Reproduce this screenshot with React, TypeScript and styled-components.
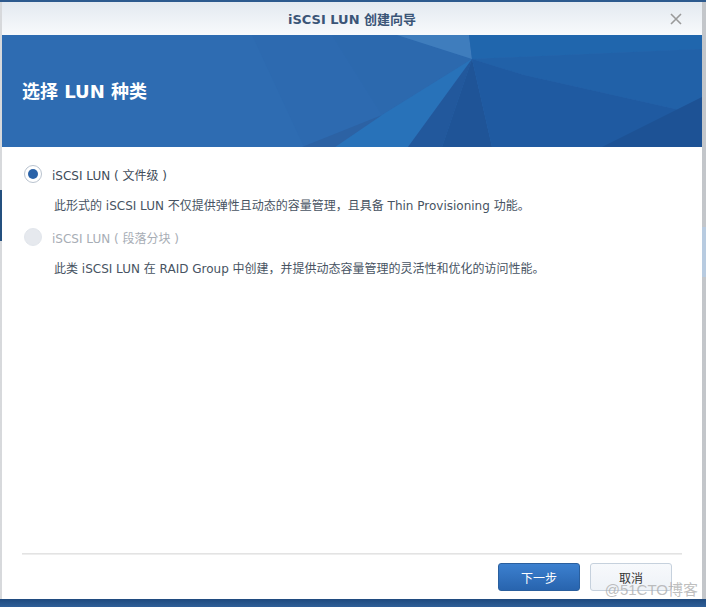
import React, { ReactElement, useState } from 'react';
import styled, { createGlobalStyle } from 'styled-components';

const GlobalStyle = createGlobalStyle`
  html, body {
    margin: 0;
    padding: 0;
    background: #c9cdd3;
  }
  * {
    box-sizing: border-box;
  }
`;

const FONT = `"DejaVu Sans", "Noto Sans CJK SC", sans-serif`;

const Page = styled.div`
  position: relative;
  width: 706px;
  height: 607px;
  padding: 2px 4px 8px 2px;
  font-family: ${FONT};
  background:
    linear-gradient(#2d5a8e, #2d5a8e) top / 100% 2px no-repeat,
    linear-gradient(#1f4a7e, #2f5f98) bottom / 100% 8px no-repeat,
    linear-gradient(#24507f, #24507f) 0 190px / 2px 51px no-repeat,
    linear-gradient(#b8cbe0, #b8cbe0) 100% 227px / 4px 50px no-repeat,
    linear-gradient(90deg, #d7d9dc, #c3c6ca);
`;

const Dialog = styled.div`
  display: flex;
  flex-direction: column;
  width: 700px;
  height: 597px;
  background: #ffffff;
`;

const TitleBar = styled.div`
  position: relative;
  display: flex;
  align-items: center;
  justify-content: center;
  height: 33px;
  background: linear-gradient(#e3e9f0, #f8fafc);
`;

const TitleText = styled.div`
  font-size: 13px;
  font-weight: bold;
  color: #3b5577;
`;

const CloseButton = styled.button`
  position: absolute;
  right: 18px;
  top: 9px;
  width: 16px;
  height: 16px;
  padding: 0;
  border: none;
  background: none;
  display: flex;
  align-items: center;
  justify-content: center;
`;

const Banner = styled.div`
  position: relative;
  height: 112px;
  background: #2e6cb2;
  overflow: hidden;
  display: flex;
  align-items: center;
  padding-left: 20px;
`;

const BannerArt = styled.svg`
  position: absolute;
  top: 0;
  left: 0;
`;

const BannerTitle = styled.h1`
  position: relative;
  margin: 0 0 2px;
  font-size: 18px;
  font-weight: bold;
  color: #ffffff;
`;

const Body = styled.div`
  flex: 1;
  padding: 16px 22px 0;
  display: flex;
  flex-direction: column;
`;

const Option = styled.label<{ disabled?: boolean }>`
  display: flex;
  align-items: center;
  gap: 10px;
  height: 22px;
  font-size: 12px;
  color: ${(p) => (p.disabled ? '#a7adb5' : '#404b59')};
  cursor: ${(p) => (p.disabled ? 'default' : 'pointer')};
`;

const Radio = styled.span<{ checked?: boolean; disabled?: boolean }>`
  position: relative;
  width: 18px;
  height: 18px;
  border-radius: 50%;
  border: 1px solid ${(p) => (p.disabled ? '#e2e6ec' : '#b9c3cf')};
  background: ${(p) => (p.disabled ? '#e6e9ee' : '#ffffff')};
  &::after {
    content: '';
    display: ${(p) => (p.checked ? 'block' : 'none')};
    position: absolute;
    left: 3px;
    top: 3px;
    width: 10px;
    height: 10px;
    border-radius: 50%;
    background: #2b63a8;
  }
`;

const Description = styled.p`
  margin: 10px 0 0 30px;
  font-size: 12px;
  line-height: 22px;
  color: #475362;
`;

const OptionBlock = styled.div`
  display: flex;
  flex-direction: column;
  margin-bottom: 9px;
`;

const Footer = styled.div`
  display: flex;
  flex-direction: column;
  padding: 0 20px 8px;
`;

const Divider = styled.div`
  height: 2px;
  background: #e3e3e3;
  border-bottom: 1px solid #eeeeee;
`;

const ButtonRow = styled.div`
  display: flex;
  justify-content: flex-end;
  gap: 10px;
  padding: 8px 10px 0 0;
`;

const Button = styled.button<{ primary?: boolean }>`
  width: 82px;
  height: 28px;
  border-radius: 3px;
  font-family: ${FONT};
  font-size: 12px;
  border: 1px solid ${(p) => (p.primary ? '#2a5f9e' : '#c6d1dd')};
  background: ${(p) =>
    p.primary ? 'linear-gradient(#3c80cf, #2864ae)' : 'linear-gradient(#f7f9fc, #eef2f7)'};
  color: ${(p) => (p.primary ? '#ffffff' : '#333333')};
`;

const Watermark = styled.div`
  position: absolute;
  right: 8px;
  bottom: 9px;
  font-family: "Liberation Sans", "Noto Sans CJK SC", sans-serif;
  font-size: 15px;
  line-height: 16px;
  color: rgba(170, 170, 170, 0.75);
  pointer-events: none;
`;

const CloseIcon = () => (
  <svg width="12" height="12" viewBox="0 0 12 12">
    <path d="M1 1 L11 11 M11 1 L1 11" stroke="#9a9a9a" strokeWidth="1.6" />
  </svg>
);

const BannerDecoration = () => (
  <BannerArt width="700" height="112" viewBox="0 0 700 112">
    <polygon points="250,0 700,0 700,112 302,112" fill="#2d6ab0" />
    <polygon points="330,0 395,0 470,24 380,80" fill="#2c69ae" />
    <polygon points="395,0 467,0 470,24" fill="#3f7dbd" />
    <polygon points="467,0 700,0 700,14 470,24" fill="#2066ad" />
    <polygon points="470,24 380,80 333,112 406,112" fill="#2872b9" />
    <polygon points="380,80 333,112 300,112" fill="#2c62a4" />
    <polygon points="470,24 406,112 440,112" fill="#22589c" />
    <polygon points="470,24 440,112 490,112" fill="#1f5497" />
    <polygon points="470,24 700,14 700,80 522,40" fill="#2161a8" />
    <polygon points="470,24 522,40 700,80 700,112 490,112" fill="#1f5aa1" />
    <polygon points="600,112 700,62 700,112" fill="#1d5295" />
  </BannerArt>
);

const App = (): ReactElement => {
  const [selected, setSelected] = useState('file');

  return (
    <>
      <GlobalStyle />
      <Page>
        <Dialog>
          <TitleBar>
            <TitleText>iSCSI LUN 创建向导</TitleText>
            <CloseButton type="button">
              <CloseIcon />
            </CloseButton>
          </TitleBar>
          <Banner>
            <BannerDecoration />
            <BannerTitle>选择 LUN 种类</BannerTitle>
          </Banner>
          <Body>
            <OptionBlock>
              <Option onClick={() => setSelected('file')}>
                <Radio checked={selected === 'file'} />
                iSCSI LUN ( 文件级 )
              </Option>
              <Description>
                此形式的 iSCSI LUN 不仅提供弹性且动态的容量管理，且具备 Thin Provisioning 功能。
              </Description>
            </OptionBlock>
            <OptionBlock>
              <Option disabled>
                <Radio disabled />
                iSCSI LUN ( 段落分块 )
              </Option>
              <Description>
                此类 iSCSI LUN 在 RAID Group 中创建，并提供动态容量管理的灵活性和优化的访问性能。
              </Description>
            </OptionBlock>
          </Body>
          <Footer>
            <Divider />
            <ButtonRow>
              <Button primary type="button">
                下一步
              </Button>
              <Button type="button">取消</Button>
            </ButtonRow>
          </Footer>
        </Dialog>
        <Watermark>@51CTO博客</Watermark>
      </Page>
    </>
  );
};

export default App;
